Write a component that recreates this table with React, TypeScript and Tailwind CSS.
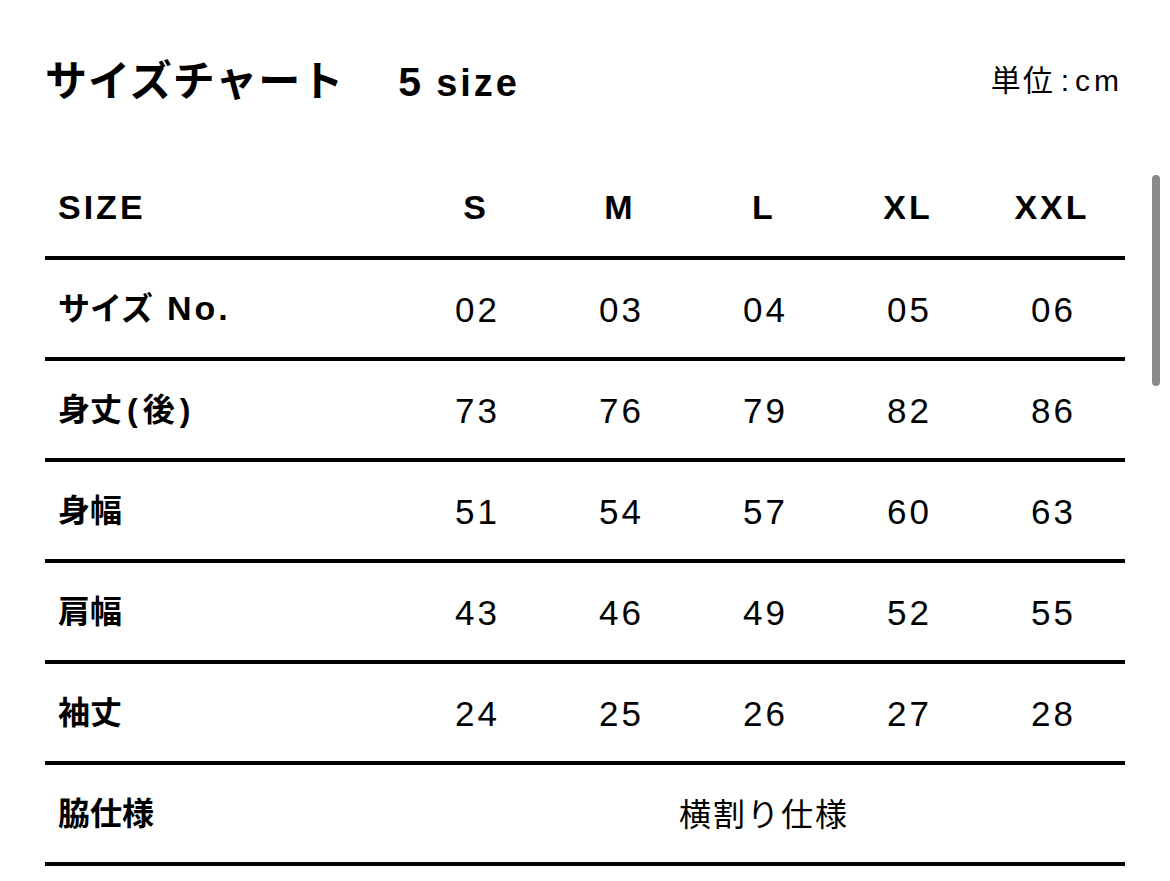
const font = '[font-family:"Liberation_Sans","Noto_Sans_CJK_JP",sans-serif]'

const sizes = ['S', 'M', 'L', 'XL', 'XXL']

const rows: { label: string; values: string[] }[] = [
  { label: 'no', values: ['02', '03', '04', '05', '06'] },
  { label: '身丈(後)', values: ['73', '76', '79', '82', '86'] },
  { label: '身幅', values: ['51', '54', '57', '60', '63'] },
  { label: '肩幅', values: ['43', '46', '49', '52', '55'] },
  { label: '袖丈', values: ['24', '25', '26', '27', '28'] },
]

function Label({ label }: { label: string }) {
  if (label === 'no') {
    return (
      <>
        サイズ<span className="ml-[14px] text-[34px] tracking-[3px]">No.</span>
      </>
    )
  }
  if (label === '身丈(後)') {
    return (
      <>
        身丈<span className="mx-[5px]">(</span>後<span className="ml-[5px]">)</span>
      </>
    )
  }
  return <>{label}</>
}

export default function App() {
  return (
    <div className={`relative h-[881px] w-[1170px] overflow-hidden bg-white text-black ${font}`}>
      <div className="px-[45px]">
        {/* heading */}
        <div className="flex h-[159px] items-start justify-between pt-[61px]">
          <h1 className="flex items-baseline text-[42px] font-bold leading-none">
            <span className="tracking-[1px]">サイズチャート</span>
            <span className="ml-[54px] text-[41px]">5</span>
            <span className="ml-[15px] text-[38px] tracking-[3px]">size</span>
          </h1>
          <p className="mt-[5px] mr-[2px] flex items-baseline text-[30px] leading-none">
            <span className="tracking-[2px]">単位</span>
            <span className="mx-[6px]">:</span>
            <span className="tracking-[4px]">cm</span>
          </p>
        </div>

        {/* table */}
        <div className="w-[1080px]">
          <div className="flex h-[101px] items-center border-b-4 border-black">
            <div className="w-[359px] pl-[13px] text-[34px] font-bold tracking-[3px]">SIZE</div>
            {sizes.map((s) => (
              <div key={s} className="w-[144px] text-center text-[34px] font-bold tracking-[3px]">
                {s}
              </div>
            ))}
          </div>

          {rows.map((r) => (
            <div key={r.label} className="flex h-[101px] items-center border-b-4 border-black">
              <div className="w-[359px] pl-[13px] text-[32px] font-bold">
                <Label label={r.label} />
              </div>
              {r.values.map((v, i) => (
                <div key={i} className="w-[144px] pl-[3px] pt-[3px] text-center text-[35px] tracking-[3px]">
                  {v}
                </div>
              ))}
            </div>
          ))}

          <div className="flex h-[101px] items-center border-b-4 border-black">
            <div className="w-[359px] pl-[13px] text-[32px] font-bold">脇仕様</div>
            <div className="w-[720px] pt-[2px] text-center text-[32px] tracking-[2px]">横割り仕様</div>
          </div>
        </div>
      </div>

      {/* overlay scrollbar */}
      <div className="absolute left-[1152px] top-[175px] h-[211px] w-[8px] rounded-full bg-[#8a8a8a]" />
    </div>
  )
}
